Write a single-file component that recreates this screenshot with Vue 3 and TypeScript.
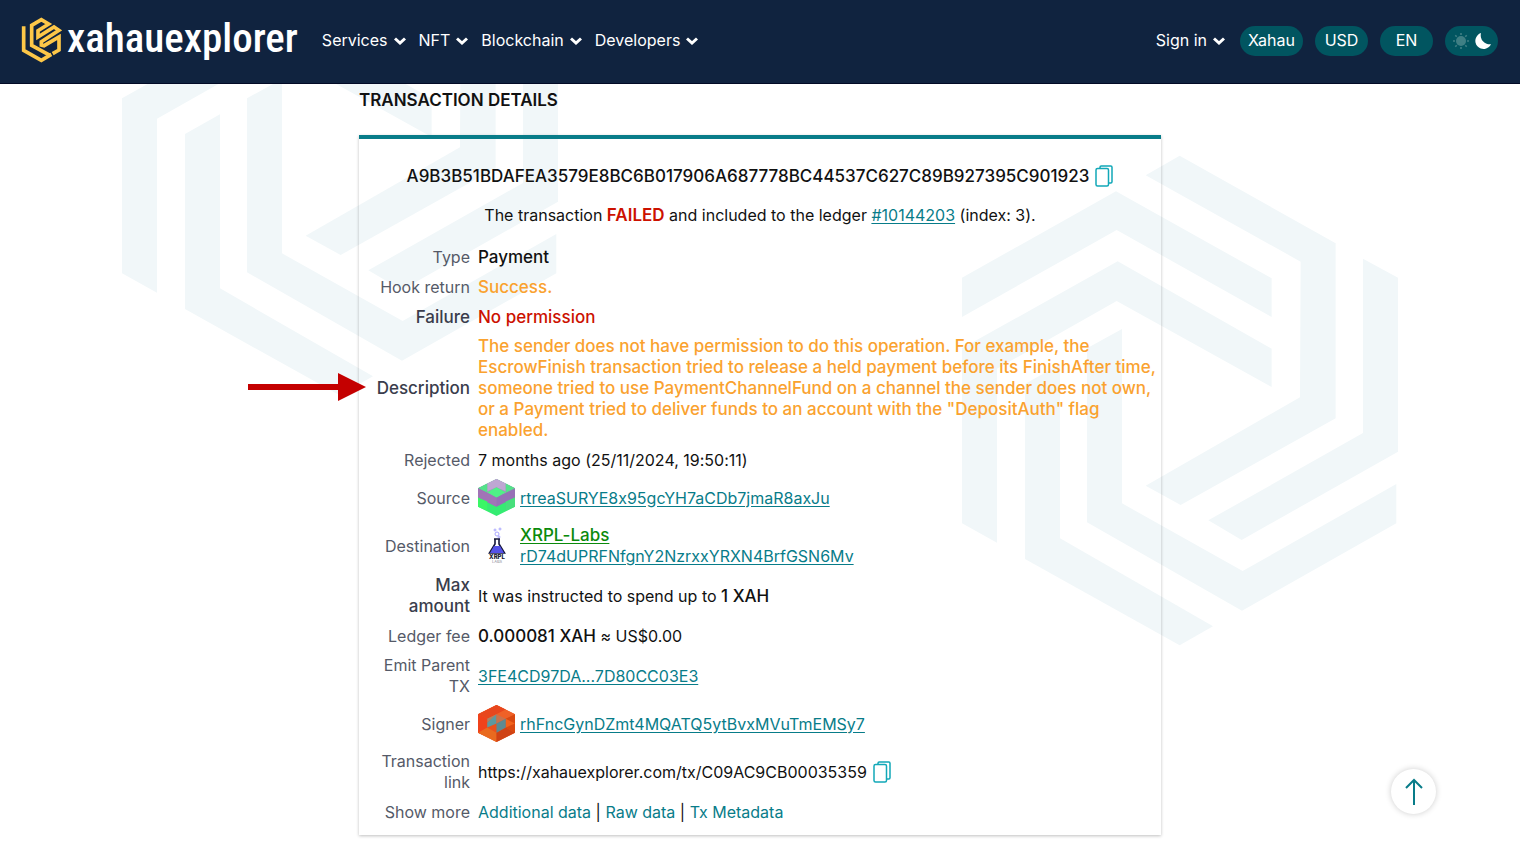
<script setup lang="ts">
import { ref } from 'vue'

const menus: string[] = ['Services', 'NFT', 'Blockchain', 'Developers']
const hash = 'A9B3B51BDAFEA3579E8BC6B017906A687778BC44537C627C89B927395C901923'
const txLink = 'https://xahauexplorer.com/tx/C09AC9CB00035359'
const dark = ref(false)

const emblem: string[] = [
  '617,106 719,47 1187,310 1187,835 722,1095 617,1037 1080,772 1082,365',
  '66,413 528,154 995,415 995,531 530,270 66,531',
  '66,1150 66,625 533,364 995,626 995,741 530,483 171,686 171,1208',
  '255,1257 255,732 360,673 360,1195 819,1459 719,1516',
  '441,1147 441,625 546,567 546,1090 908,1293 1369,1032 1369,1150 906,1412',
  '1269,356 1374,413 1374,935 905,1200 805,1141 1269,879',
]

function copy(text: string): void {
  navigator.clipboard?.writeText(text)
}

function toTop(): void {
  window.scrollTo({ top: 0, behavior: 'smooth' })
}
</script>

<template>
  <div class="page">
    <div class="backdrop" aria-hidden="true">
      <svg width="1280" height="856" viewBox="0 0 1280 856">
        <g fill="#f1f7f9">
          <g transform="translate(-20 -110) scale(0.33333)">
            <polygon v-for="p in emblem" :key="p" :points="p" />
          </g>
          <g transform="translate(820 140) scale(0.33333)">
            <polygon v-for="p in emblem" :key="p" :points="p" />
          </g>
        </g>
      </svg>
    </div>

    <header class="topbar">
      <a class="brand" href="#">
        <svg class="brand-mark" width="42" height="48" viewBox="0 0 126 144" aria-hidden="true">
          <g fill="none" stroke="#fdc748" stroke-width="11">
            <path d="M11 34V106L64 136L94 118" />
            <path d="M90 121L35 91V31L64 14L86 27L54 47V66L102 36L117 46L64 80L64 90L72 92L117 66V105L98 116" />
          </g>
        </svg>
        <span class="brand-name">xahauexplorer</span>
      </a>
      <nav class="menu">
        <button v-for="m in menus" :key="m" class="menu-item" type="button">
          {{ m }}
          <svg width="12" height="8" viewBox="0 0 12 8" aria-hidden="true"><path d="M1 1.500L6 6L11 1.500" /></svg>
        </button>
      </nav>
      <div class="tools">
        <button class="menu-item" type="button">
          Sign in
          <svg width="12" height="8" viewBox="0 0 12 8" aria-hidden="true"><path d="M1 1.500L6 6L11 1.500" /></svg>
        </button>
        <button class="pill wide" type="button">Xahau</button>
        <button class="pill" type="button">USD</button>
        <button class="pill" type="button">EN</button>
        <button class="pill theme" type="button" aria-label="Switch theme" @click="dark = !dark">
          <svg width="16" height="16" viewBox="0 0 16 16" aria-hidden="true">
            <circle cx="8" cy="8" r="5" fill="#3f7f84" />
            <path
              d="M8 0V2M8 14V16M0 8H2M14 8H16M2.3 2.3L3.7 3.7M12.3 12.3L13.7 13.7M2.3 13.7L3.7 12.3M12.3 3.7L13.7 2.3"
              stroke="#3f7f84"
              stroke-width="1.6"
            />
          </svg>
          <svg width="16" height="16" viewBox="0 0 16 16" aria-hidden="true">
            <path d="M6 0A8.2 8.2 0 1 0 16 11.2A9 9 0 0 1 6 0Z" fill="#fff" />
          </svg>
        </button>
      </div>
    </header>

    <main class="content">
      <h1 class="title">TRANSACTION DETAILS</h1>
      <section class="card">
        <p class="hash">
          <span>{{ hash }}</span>
          <button class="copy" type="button" aria-label="Copy hash" @click="copy(hash)">
            <svg width="18" height="22" viewBox="0 0 18 22" aria-hidden="true">
              <path d="M5 3V2.2Q5 1 6.2 1H15.8Q17 1 17 2.2V16.8Q17 18 15.8 18H13.5" />
              <rect x="1" y="3.5" width="12.5" height="17.5" rx="1.5" />
            </svg>
          </button>
        </p>
        <p class="summary">
          The transaction <b class="red status">FAILED</b> and included to the ledger
          <a href="#">#10144203</a> (index: 3).
        </p>
        <table class="details">
          <tbody>
            <tr><th scope="row">Type</th><td><b>Payment</b></td></tr>
            <tr><th scope="row">Hook return</th><td><b class="orange">Success.</b></td></tr>
            <tr><th scope="row" class="strong">Failure</th><td><b class="red">No permission</b></td></tr>
            <tr>
              <th scope="row" class="strong marked">
                Description
                <svg class="pointer" width="118" height="28" viewBox="0 0 118 28" aria-hidden="true">
                  <path d="M0 11H90V0L118 14L90 28V17H0Z" fill="#c40000" />
                </svg>
              </th>
              <td>
                <b class="orange">The sender does not have permission to do this operation. For example, the
                  EscrowFinish transaction tried to release a held payment before its FinishAfter time,
                  someone tried to use PaymentChannelFund on a channel the sender does not own, or a Payment
                  tried to deliver funds to an account with the "DepositAuth" flag enabled.</b>
              </td>
            </tr>
            <tr><th scope="row">Rejected</th><td>7 months ago (25/11/2024, 19:50:11)</td></tr>
            <tr>
              <th scope="row">Source</th>
              <td>
                <div class="account">
                  <svg width="38" height="38" viewBox="1 1 37 37" aria-hidden="true">
                    <path d="M19 1L37 10V28L19 37L1 28V10Z" fill="#35ec72" />
                    <path d="M19 1L37 10L19 19L1 10Z" fill="#a98bc4" />
                    <path d="M10 5.500L19 1L28 5.500V13L19 9L10 13Z" fill="#bfa6d3" />
                    <path d="M1 10L10 5.500V14.500ZM37 10L28 5.500V14.500Z" fill="#54e28a" />
                    <path d="M1 10L19 19L37 10V19L19 28L1 19Z" fill="#9770b6" />
                    <path d="M1 10L19 19V28L1 19Z" fill="#a174b6" />
                    <path d="M10 14L19 9L28 14L19 19Z" fill="#4ff286" />
                    <path d="M1 19L10 23V32L1 28Z" fill="#3af766" />
                    <path d="M28 23L37 19V28L28 32Z" fill="#48df7c" />
                  </svg>
                  <a href="#">rtreaSURYE8x95gcYH7aCDb7jmaR8axJu</a>
                </div>
              </td>
            </tr>
            <tr>
              <th scope="row">Destination</th>
              <td>
                <div class="account">
                  <svg width="38" height="38" viewBox="0 1 38 38" aria-hidden="true">
                    <g fill="none" stroke="#a9a6ff">
                      <circle cx="19" cy="8" r="2" />
                      <circle cx="22" cy="3" r="1" />
                      <circle cx="17" cy="4" r="1" />
                      <circle cx="21" cy="11" r="1" />
                    </g>
                    <path d="M16 13H22M17 13V18L11.500 27H26.500L21 18V13" fill="none" stroke="#14163a" stroke-width="1.600" />
                    <path d="M16 20H22L26 27H12Z" fill="#5552e8" />
                    <text x="19" y="33" text-anchor="middle" font-size="6" font-weight="800" fill="#11132e">XRPL</text>
                    <text x="19" y="37" text-anchor="middle" font-size="4" fill="#8b8b98">LABS</text>
                  </svg>
                  <span class="stack">
                    <a class="green" href="#"><b>XRPL-Labs</b></a>
                    <a href="#">rD74dUPRFNfgnY2NzrxxYRXN4BrfGSN6Mv</a>
                  </span>
                </div>
              </td>
            </tr>
            <tr><th scope="row" class="strong">Max amount</th><td>It was instructed to spend up to <b>1 XAH</b></td></tr>
            <tr><th scope="row">Ledger fee</th><td><b>0.000081 XAH</b> ≈ US$0.00</td></tr>
            <tr><th scope="row">Emit Parent TX</th><td><a href="#">3FE4CD97DA...7D80CC03E3</a></td></tr>
            <tr>
              <th scope="row">Signer</th>
              <td>
                <div class="account">
                  <svg width="38" height="38" viewBox="1 1 37 37" aria-hidden="true">
                    <path d="M19 1L37 10V28L19 37L1 28V10Z" fill="#e9511d" />
                    <path d="M19 1L37 10L19 19L1 10Z" fill="#ef6127" />
                    <path d="M19 1L28 5.500L10 14.500L1 10Z" fill="#e8471d" />
                    <path d="M1 10L10 14.500V32L1 28Z" fill="#f0421b" />
                    <path d="M1 28L10 23L19 28V37Z" fill="#e96a1f" />
                    <path d="M19 28L28 23L37 28L19 37Z" fill="#cf4214" />
                    <path d="M28 14.500L37 10V28L28 23Z" fill="#d9480f" />
                    <path d="M28 14.500L37 19L28 23Z" fill="#f2621b" />
                    <path d="M19 10L19 19L10 23V18Z" fill="#5d99a0" />
                    <path d="M19 10L10 14.500V18Z" fill="#a88468" />
                    <path d="M19 10L28 14.500L19 19Z" fill="#c9724c" />
                    <path d="M19 19L28 14.500V23L19 28Z" fill="#5c8a92" />
                  </svg>
                  <a href="#">rhFncGynDZmt4MQATQ5ytBvxMVuTmEMSy7</a>
                </div>
              </td>
            </tr>
            <tr>
              <th scope="row">Transaction link</th>
              <td>
                <div class="linkline">
                  <span>{{ txLink }}</span>
                  <button class="copy" type="button" aria-label="Copy link" @click="copy(txLink)">
                    <svg width="18" height="22" viewBox="0 0 18 22" aria-hidden="true">
                      <path d="M5 3V2.2Q5 1 6.2 1H15.8Q17 1 17 2.2V16.8Q17 18 15.8 18H13.5" />
                      <rect x="1" y="3.5" width="12.5" height="17.5" rx="1.5" />
                    </svg>
                  </button>
                </div>
              </td>
            </tr>
            <tr>
              <th scope="row">Show more</th>
              <td class="more"><a href="#">Additional data</a> | <a href="#">Raw data</a> | <a href="#">Tx Metadata</a></td>
            </tr>
          </tbody>
        </table>
      </section>
    </main>

    <button class="to-top" type="button" aria-label="Back to top" @click="toTop">
      <svg width="18" height="28" viewBox="0 0 18 28" aria-hidden="true">
        <path d="M9 27V2M1 10L9 2L17 10" fill="none" stroke="#087c89" stroke-width="2" />
      </svg>
    </button>
  </div>
</template>

<style>
body {
  margin: 0;
  background: #fff;
}
</style>

<style scoped>
.page {
  position: relative;
  min-height: 100vh;
  overflow: hidden;
  font-family: Inter, "Liberation Sans", sans-serif;
  font-feature-settings: "calt" 0;
  font-size: 16px;
  line-height: 21px;
  color: #111;
}
.backdrop {
  position: absolute;
  inset: 0;
  display: flex;
  justify-content: center;
  overflow: hidden;
}
.backdrop svg {
  flex: none;
}
button {
  font: inherit;
  border: 0;
  padding: 0;
  background: none;
  cursor: pointer;
}
.topbar {
  position: relative;
  display: flex;
  align-items: center;
  height: 84px;
  box-sizing: border-box;
  padding: 0 22px 2px 20px;
  background: #10233f;
  border-bottom: 1px solid #020a26;
  color: #fff;
}
.brand {
  display: flex;
  align-items: center;
  gap: 5px;
  padding-bottom: 4px;
  color: #fff;
  text-decoration: none;
}
.brand-name {
  font-family: "Roboto Condensed", "Open Sans Condensed", "Liberation Sans Narrow", "Liberation Sans", sans-serif;
  font-size: 41px;
  line-height: 44px;
  font-weight: 500;
  padding-bottom: 2px;
}
.menu {
  display: flex;
  gap: 13px;
  margin-left: 24px;
}
.menu-item {
  display: flex;
  align-items: center;
  gap: 6px;
  color: #fff;
  white-space: nowrap;
}
.menu-item path {
  fill: none;
  stroke: #fff;
  stroke-width: 3;
}
.tools {
  display: flex;
  align-items: center;
  gap: 12px;
  margin-left: auto;
}
.pill {
  display: flex;
  align-items: center;
  justify-content: center;
  width: 53px;
  height: 30px;
  border-radius: 15px;
  background: #015560;
  color: #fff;
}
.wide {
  width: 63px;
  margin-left: 3px;
}
.theme {
  gap: 6px;
}
.content {
  position: relative;
  max-width: 802px;
  margin: 0 auto;
}
.title {
  margin: 0;
  padding: 6px 0 24px;
  font-size: 17px;
  line-height: 21px;
  font-weight: 600;
}
.card {
  border-top: 4px solid #087c89;
  padding: 25px 0 8px;
  box-shadow: 0 1px 3px rgba(0, 0, 0, 0.25);
}
.hash {
  display: flex;
  align-items: center;
  justify-content: center;
  gap: 6px;
  margin: 0;
  height: 24px;
  font-size: 17px;
  font-weight: 500;
}
.copy svg {
  display: block;
  fill: none;
  stroke: #12a8b8;
  stroke-width: 1.5;
}
.summary {
  margin: 17px 0 16px;
  text-align: center;
}
.details {
  width: 100%;
  border-collapse: collapse;
}
.details th {
  width: 95px;
  padding: 4px 0 4px 16px;
  text-align: right;
  font-weight: 400;
  color: #555a68;
}
.details .strong {
  font-size: 17px;
  font-weight: 500;
  color: #3a3d4c;
}
.details td {
  height: 22px;
  padding: 4px 1px 4px 8px;
}
b {
  font-size: 17px;
  font-weight: 500;
}
.status {
  font-weight: 600;
}
.red {
  color: #cc1100;
}
.orange {
  color: #faa22f;
}
a {
  color: #087c89;
  text-underline-offset: 2px;
}
.green {
  color: #0b8a0b;
}
.marked {
  position: relative;
}
.pointer {
  position: absolute;
  right: 104px;
  top: 50%;
  margin-top: -16px;
}
.account,
.linkline {
  display: flex;
  align-items: center;
  gap: 4px;
}
.account svg {
  flex: none;
}
.linkline {
  gap: 6px;
}
.stack {
  display: flex;
  flex-direction: column;
  align-items: flex-start;
}
.more a {
  text-decoration: none;
}
.to-top {
  position: fixed;
  right: 84px;
  bottom: 42px;
  display: flex;
  align-items: center;
  justify-content: center;
  width: 45px;
  height: 45px;
  border-radius: 50%;
  background: #fff;
  box-shadow: 0 0 6px rgba(0, 0, 0, 0.2);
}
</style>
